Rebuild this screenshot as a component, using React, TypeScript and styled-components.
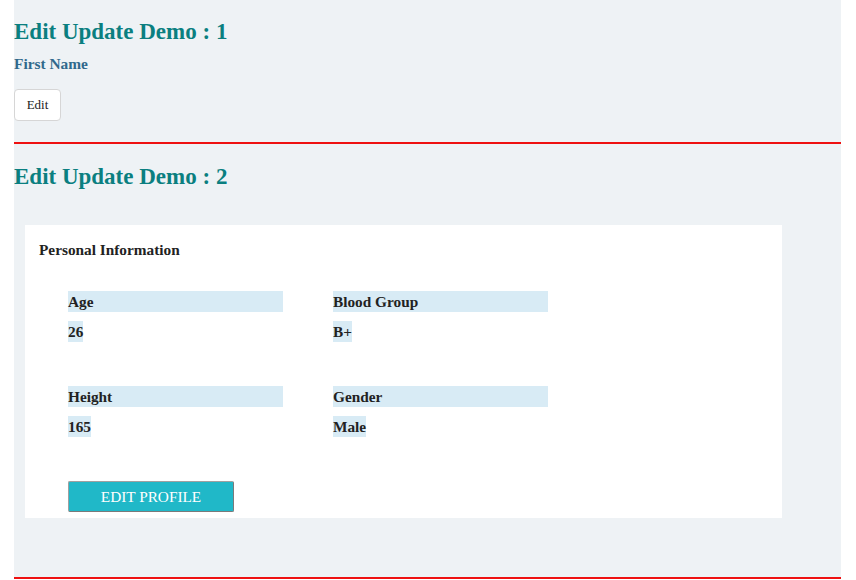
import React from 'react';
import styled, { createGlobalStyle } from 'styled-components';

const palette = {
  pageBg: '#ffffff',
  panelBg: '#eef2f5',
  teal: '#0a7f80',
  steel: '#30698c',
  text: '#222222',
  labelBg: '#d8ebf5',
  red: '#ee1111',
  cyan: '#20b8c8',
};

const GlobalStyle = createGlobalStyle`
  body {
    margin: 0;
    background: ${palette.pageBg};
    font-family: 'Liberation Serif', 'Times New Roman', serif;
  }
`;

const fields = [
  { label: 'Age', value: '26' },
  { label: 'Blood Group', value: 'B+' },
  { label: 'Height', value: '165' },
  { label: 'Gender', value: 'Male' },
];

const App = () => {
  return (
    <>
      <GlobalStyle />
      <Panel>
        <DemoTitle>Edit Update Demo : 1</DemoTitle>
        <FieldName>First Name</FieldName>
        <EditButton>Edit</EditButton>
        <Divider />

        <DemoTitle $top={20}>Edit Update Demo : 2</DemoTitle>
        <Card>
          <CardTitle>Personal Information</CardTitle>
          <InfoGrid>
            {fields.map((f) => (
              <Field key={f.label}>
                <Label>{f.label}</Label>
                <Value>{f.value}</Value>
              </Field>
            ))}
          </InfoGrid>
          <ProfileButton>EDIT PROFILE</ProfileButton>
        </Card>
        <Divider $top={59} />
      </Panel>
    </>
  );
};

const Panel = styled.div`
  display: flex;
  flex-direction: column;
  align-items: flex-start;
  margin: 0 15px 0 14px;
  padding-top: 1px;
  background-color: ${palette.panelBg};
`;

const DemoTitle = styled.h2<{ $top?: number }>`
  margin: ${(p) => p.$top ?? 18}px 0 0;
  font-size: 23px;
  line-height: 25px;
  font-weight: bold;
  color: ${palette.teal};
`;

const FieldName = styled.p`
  margin: 11px 0 0;
  font-size: 15.4px;
  line-height: 17px;
  font-weight: bold;
  color: ${palette.steel};
`;

const EditButton = styled.button`
  margin-top: 17px;
  width: 47px;
  height: 32px;
  padding: 0;
  background: #ffffff;
  border: 1px solid #d6d6d6;
  border-radius: 4px;
  font-family: inherit;
  font-size: 13px;
  color: ${palette.text};
  cursor: pointer;
`;

const Divider = styled.hr<{ $top?: number }>`
  align-self: stretch;
  margin: ${(p) => p.$top ?? 21}px 0 0;
  height: 2px;
  border: none;
  background-color: ${palette.red};
`;

const Card = styled.div`
  display: flex;
  flex-direction: column;
  align-items: flex-start;
  margin: 36px 0 0 11px;
  width: 757px;
  height: 293px;
  box-sizing: border-box;
  padding: 16px 14px 0;
  background-color: #ffffff;
`;

const CardTitle = styled.h4`
  margin: 0;
  font-size: 15.3px;
  line-height: 17px;
  font-weight: bold;
  color: ${palette.text};
`;

const InfoGrid = styled.div`
  display: grid;
  grid-template-columns: 215px 215px;
  column-gap: 50px;
  row-gap: 44px;
  margin: 33px 0 0 29px;
`;

const Field = styled.div`
  display: flex;
  flex-direction: column;
  align-items: flex-start;
  gap: 9px;
`;

const Label = styled.div`
  align-self: stretch;
  height: 21px;
  font-size: 15.3px;
  line-height: 22px;
  font-weight: bold;
  color: ${palette.text};
  background-color: ${palette.labelBg};
`;

const Value = styled(Label)`
  align-self: flex-start;
`;

const ProfileButton = styled.button`
  margin: 44px 0 0 29px;
  width: 166px;
  height: 31px;
  padding: 0;
  background-color: ${palette.cyan};
  border: 1px solid #7a7a7a;
  border-top-color: #a0a0a0;
  border-left-color: #a0a0a0;
  border-radius: 2px;
  font-family: inherit;
  font-size: 15.3px;
  color: #ffffff;
  cursor: pointer;
`;

export default App;
